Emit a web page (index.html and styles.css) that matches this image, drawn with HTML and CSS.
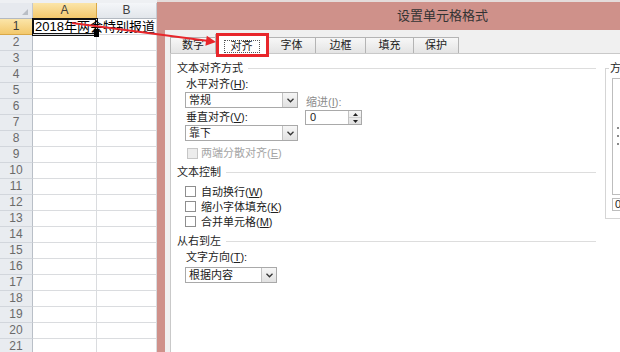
FILE: index.html
```html
<!DOCTYPE html>
<html lang="zh-CN">
<head>
<meta charset="utf-8">
<title>设置单元格格式</title>
<link rel="stylesheet" href="styles.css">
</head>
<body>
<div class="screen">
  <div class="sheet">
    <div class="grid">
      <div class="corner"><span class="tri"></span></div>
      <div class="colhead sel">A</div>
      <div class="colhead">B</div>

      <div class="rowhead sel">1</div>
      <div class="cell a1"><span class="val">2018年两会特别报道</span><span class="handle"></span></div>
      <div class="cell"></div>

      <div class="rowhead">2</div><div class="cell"></div><div class="cell"></div>
      <div class="rowhead">3</div><div class="cell"></div><div class="cell"></div>
      <div class="rowhead">4</div><div class="cell"></div><div class="cell"></div>
      <div class="rowhead">5</div><div class="cell"></div><div class="cell"></div>
      <div class="rowhead">6</div><div class="cell"></div><div class="cell"></div>
      <div class="rowhead">7</div><div class="cell"></div><div class="cell"></div>
      <div class="rowhead">8</div><div class="cell"></div><div class="cell"></div>
      <div class="rowhead">9</div><div class="cell"></div><div class="cell"></div>
      <div class="rowhead">10</div><div class="cell"></div><div class="cell"></div>
      <div class="rowhead">11</div><div class="cell"></div><div class="cell"></div>
      <div class="rowhead">12</div><div class="cell"></div><div class="cell"></div>
      <div class="rowhead">13</div><div class="cell"></div><div class="cell"></div>
      <div class="rowhead">14</div><div class="cell"></div><div class="cell"></div>
      <div class="rowhead">15</div><div class="cell"></div><div class="cell"></div>
      <div class="rowhead">16</div><div class="cell"></div><div class="cell"></div>
      <div class="rowhead">17</div><div class="cell"></div><div class="cell"></div>
      <div class="rowhead">18</div><div class="cell"></div><div class="cell"></div>
      <div class="rowhead">19</div><div class="cell"></div><div class="cell"></div>
      <div class="rowhead">20</div><div class="cell"></div><div class="cell"></div>
      <div class="rowhead">21</div><div class="cell"></div><div class="cell"></div>
    </div>
  </div>

  <div class="dialog">
    <div class="titlebar">设置单元格格式</div>
    <div class="client">
      <div class="tabs">
        <div class="tab w46">数字</div>
        <div class="tab active w53"><span class="focus">对齐</span></div>
        <div class="tab w49">字体</div>
        <div class="tab w51">边框</div>
        <div class="tab w49">填充</div>
        <div class="tab w46">保护</div>
      </div>
      <div class="panel">
        <div class="leftcol">
          <div class="sec">文本对齐方式</div>
          <div class="align-block">
            <div class="align-main">
              <div class="lbl">水平对齐(<u>H</u>):</div>
              <div class="combo c113"><span class="v">常规</span><span class="btn"><svg width="7" height="5" viewBox="0 0 7 5"><polyline points="0.5,0.8 3.5,3.8 6.5,0.8" fill="none" stroke="#333" stroke-width="1.3"/></svg></span></div>
              <div class="lbl gap2">垂直对齐(<u>V</u>):</div>
              <div class="combo c113"><span class="v">靠下</span><span class="btn"><svg width="7" height="5" viewBox="0 0 7 5"><polyline points="0.5,0.8 3.5,3.8 6.5,0.8" fill="none" stroke="#333" stroke-width="1.3"/></svg></span></div>
            </div>
            <div class="indent">
              <div class="lbl dim">缩进(<u>I</u>):</div>
              <div class="spinner">
                <span class="num">0</span>
                <span class="spin">
                  <span class="half"><svg width="5" height="3" viewBox="0 0 5 3"><polygon points="0,3 2.5,0 5,3" fill="#222"/></svg></span>
                  <span class="half"><svg width="5" height="3" viewBox="0 0 5 3"><polygon points="0,0 2.5,3 5,0" fill="#222"/></svg></span>
                </span>
              </div>
            </div>
          </div>
          <div class="chk-row disabled"><span class="box"></span><span>两端分散对齐(<u>E</u>)</span></div>

          <div class="sec mt5">文本控制</div>
          <div class="checks">
            <div class="chk"><span class="box"></span><span>自动换行(<u>W</u>)</span></div>
            <div class="chk"><span class="box"></span><span>缩小字体填充(<u>K</u>)</span></div>
            <div class="chk"><span class="box"></span><span>合并单元格(<u>M</u>)</span></div>
          </div>

          <div class="sec mt5">从右到左</div>
          <div class="lbl dir-lbl">文字方向(<u>T</u>):</div>
          <div class="combo c92 dir-combo"><span class="v">根据内容</span><span class="btn"><svg width="7" height="5" viewBox="0 0 7 5"><polyline points="0.5,0.8 3.5,3.8 6.5,0.8" fill="none" stroke="#333" stroke-width="1.3"/></svg></span></div>
        </div>

        <fieldset class="orient">
          <legend>方向</legend>
          <div class="preview"><span class="dot"></span><span class="dot"></span><span class="dot"></span></div>
          <div class="deg">0</div>
        </fieldset>
      </div>
    </div>
  </div>

  <svg class="arrow" width="620" height="352" viewBox="0 0 620 352">
    <line x1="72" y1="23" x2="207" y2="40.8" stroke="#e8262b" stroke-width="2"/>
    <polygon points="216,42 206.8,35.7 205.4,45.7" fill="#e8262b"/>
  </svg>
  <div class="callout"></div>
</div>
</body>
</html>
```

FILE: styles.css
```css
* { box-sizing: border-box; }
html, body { margin: 0; padding: 0; }
body {
  width: 620px;
  height: 352px;
  overflow: hidden;
  background: #fff;
  font-family: "Liberation Sans", "Noto Sans CJK SC", sans-serif;
  color: #222;
}
.screen {
  position: relative;
  display: flex;
  width: 620px;
  height: 352px;
  overflow: hidden;
}

/* ---------- spreadsheet ---------- */
.sheet {
  width: 157px;
  flex: none;
  overflow: hidden;
  border-top: 3px solid #eef0f3;
  background: #fff;
}
.grid {
  display: grid;
  grid-template-columns: 33px 64px 60px;
  grid-auto-rows: 16px;
}
.corner {
  display: flex;
  justify-content: flex-end;
  align-items: flex-end;
  padding: 0 4px 3px 0;
  background: #e6e9ee;
  border-right: 1px solid #c3c8cf;
  border-bottom: 1px solid #b3b9c1;
}
.tri {
  width: 0;
  height: 0;
  border-left: 6px solid transparent;
  border-bottom: 6px solid #b9bec5;
}
.colhead {
  background: linear-gradient(#f4f6f9, #e2e6eb);
  border-right: 1px solid #c6cbd2;
  border-bottom: 1px solid #b3b9c1;
  font-size: 12px;
  line-height: 15px;
  text-align: center;
  color: #3f3f3f;
}
.rowhead {
  background: #e9ecf0;
  border-right: 1px solid #b9bfc7;
  border-bottom: 1px solid #d2d6dc;
  font-size: 12px;
  line-height: 15px;
  text-align: center;
  color: #6a6a6a;
}
.colhead.sel, .rowhead.sel {
  background: linear-gradient(#fbe5a9, #f3c86c);
  border-right-color: #d9a847;
  border-bottom-color: #d9a847;
  color: #3a3a3a;
}
.cell {
  min-width: 0;
  border-right: 1px solid #dadcdf;
  border-bottom: 1px solid #dadcdf;
}
.a1 {
  position: relative;
  z-index: 1;
  box-shadow: 0 0 0 1px #111, inset 0 0 0 1px #111;
}
.val {
  display: block;
  white-space: nowrap;
  padding-left: 2px;
  font-size: 13px;
  line-height: 15px;
  color: #000;
}
.handle {
  position: absolute;
  right: -3px;
  bottom: -3px;
  width: 5px;
  height: 8px;
  background: #000;
}

/* ---------- dialog ---------- */
.dialog {
  flex: 1;
  min-width: 0;
  display: flex;
  flex-direction: column;
  overflow: hidden;
}
.titlebar {
  flex: none;
  height: 30px;
  background: #cf918a;
  border-top: 2px solid #e4dcdb;
  padding-left: 240px;
  font-size: 13px;
  line-height: 28px;
  color: #333;
  white-space: nowrap;
}
.client {
  flex: 1;
  display: flex;
  flex-direction: column;
  background: #f0f0f0;
  border-left: 8px solid #cf918a;
  padding-left: 5px;
}
.tabs {
  flex: none;
  display: flex;
  align-items: flex-end;
  height: 16px;
  margin-top: 7px;
}
.tab {
  height: 16px;
  margin-right: -1px;
  border: 1px solid #b4b4b4;
  border-bottom: none;
  background: linear-gradient(#f7f7f7, #e4e4e4);
  font-size: 11px;
  line-height: 14px;
  text-align: center;
  color: #222;
  white-space: nowrap;
}
.w46 { width: 46px; }
.w49 { width: 49px; }
.w51 { width: 51px; }
.w53 { width: 53px; }
.tab.active {
  position: relative;
  z-index: 2;
  height: 20px;
  margin-bottom: -1px;
  background: #fff;
}
.focus {
  display: inline-block;
  margin-top: 5px;
  padding: 0 6px;
  border: 1px dotted #555;
  line-height: 11px;
}
.panel {
  flex: 1;
  display: flex;
  align-items: flex-start;
  background: #fff;
  border: 1px solid #c9c9c9;
  border-right: none;
  border-bottom: none;
  padding: 7px 0 0 6px;
}
.leftcol {
  width: 419px;
  flex: none;
}
.sec {
  display: flex;
  align-items: center;
  height: 14px;
  font-size: 11px;
  line-height: 14px;
  color: #1e1e1e;
  white-space: nowrap;
}
.sec::after {
  content: "";
  flex: 1;
  height: 1px;
  margin-left: 5px;
  background: #dddddd;
}
.mt5 { margin-top: 5px; }
.align-block {
  display: flex;
  padding-left: 8px;
  margin-top: 2px;
}
.lbl {
  height: 14px;
  padding-left: 1px;
  font-size: 11px;
  line-height: 14px;
  color: #222;
  white-space: nowrap;
}
.lbl.dim { color: #8c8c8c; }
.gap2 { margin-top: 2px; }
.combo {
  display: flex;
  height: 16px;
  margin-top: 1px;
  border: 1px solid #a9a9a9;
  background: #fff;
  font-size: 11px;
  line-height: 14px;
}
.c113 { width: 113px; }
.c92 { width: 92px; }
.combo .v {
  flex: 1;
  padding-left: 3px;
  color: #1a1a1a;
  white-space: nowrap;
}
.combo .btn {
  width: 15px;
  display: flex;
  align-items: center;
  justify-content: center;
  border-left: 1px solid #c2c2c2;
  background: linear-gradient(#f6f6f6, #e1e1e1);
}
.indent {
  margin-left: 7px;
  padding-top: 18px;
}
.spinner {
  display: flex;
  width: 57px;
  height: 15px;
  margin-top: 1px;
  border: 1px solid #a9a9a9;
  background: #fff;
}
.spinner .num {
  flex: 1;
  padding-left: 4px;
  font-size: 11px;
  line-height: 13px;
}
.spin {
  width: 13px;
  display: flex;
  flex-direction: column;
  border-left: 1px solid #c2c2c2;
  background: linear-gradient(#f6f6f6, #e1e1e1);
}
.half {
  flex: 1;
  display: flex;
  align-items: center;
  justify-content: center;
}
.half + .half { border-top: 1px solid #cfcfcf; }
.box {
  width: 11px;
  height: 11px;
  flex: none;
  border: 1px solid #8e8e8e;
  background: #fff;
}
.chk-row {
  display: flex;
  align-items: center;
  gap: 3px;
  height: 14px;
  margin-top: 5px;
  padding-left: 10px;
  font-size: 11px;
  line-height: 14px;
  white-space: nowrap;
}
.chk-row.disabled { color: #a5a5a5; }
.chk-row.disabled .box {
  border-color: #c6c6c6;
  background: #ececec;
}
.checks {
  margin-top: 5px;
  padding-left: 8px;
}
.chk {
  display: flex;
  align-items: center;
  gap: 5px;
  height: 15px;
  font-size: 11px;
  line-height: 14px;
  color: #222;
  white-space: nowrap;
}
.dir-lbl {
  margin-top: 2px;
  padding-left: 9px;
}
.dir-combo {
  margin-top: 3px;
  margin-left: 8px;
}

/* orientation group (mostly off-screen) */
.orient {
  flex: none;
  width: 130px;
  height: 158px;
  margin: 0 0 0 9px;
  padding: 3px 6px 0 6px;
  border: 1px solid #d5d5d5;
  min-width: 0;
}
.orient legend {
  margin-left: -3px;
  padding: 0 1px;
  font-size: 11px;
  line-height: 14px;
  color: #1e1e1e;
}
.preview {
  display: flex;
  flex-direction: column;
  gap: 6px;
  height: 117px;
  border: 1px solid #bdbdbd;
  background: #fff;
  padding: 48px 0 0 4px;
}
.dot {
  width: 2px;
  height: 2px;
  background: #8a8a8a;
}
.deg {
  height: 13px;
  margin-top: 3px;
  border: 1px solid #bdbdbd;
  padding-left: 2px;
  font-size: 11px;
  line-height: 11px;
  background: #fff;
}

/* ---------- annotation overlays ---------- */
.arrow {
  position: absolute;
  left: 0;
  top: 0;
  pointer-events: none;
  z-index: 5;
}
.callout {
  position: absolute;
  left: 216px;
  top: 33px;
  width: 53px;
  height: 24px;
  border: 3px solid #e8262b;
  z-index: 6;
  pointer-events: none;
}
```
